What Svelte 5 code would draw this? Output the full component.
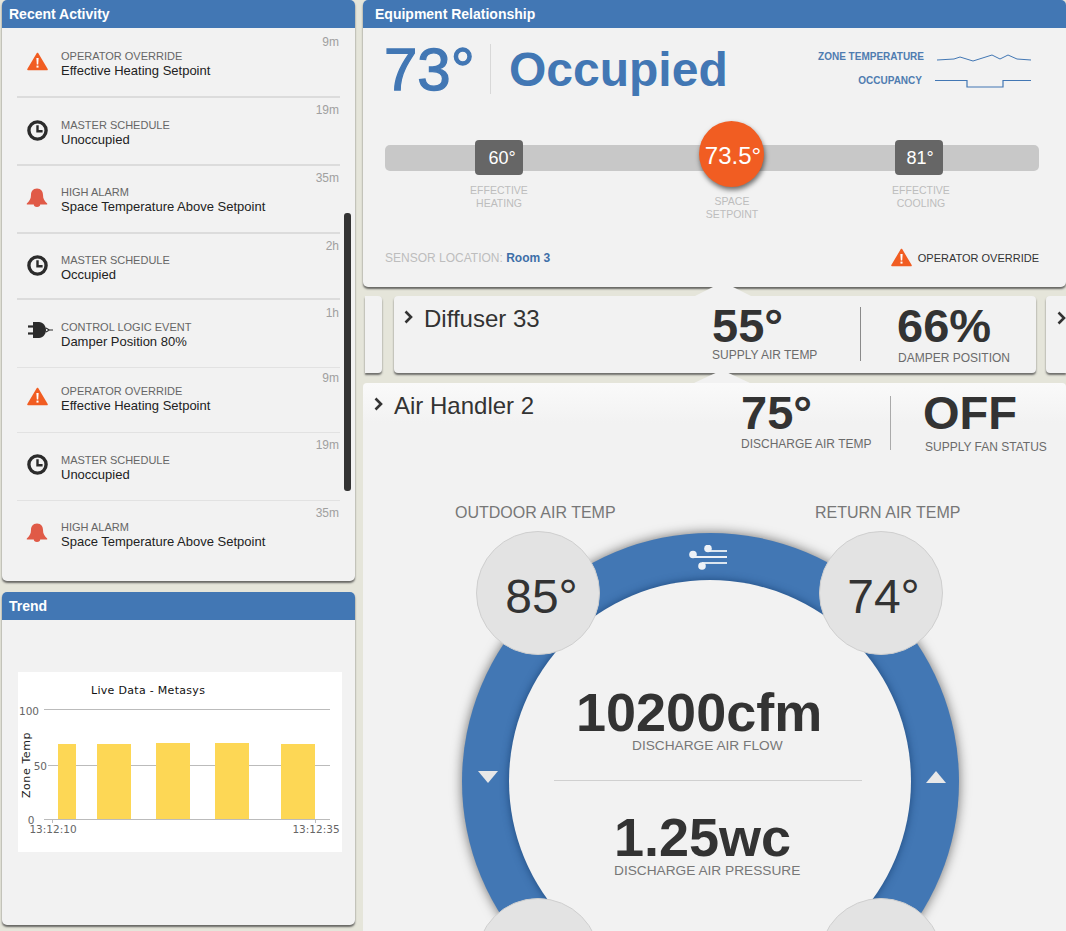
<script>
  const rows = [
    { icon: 'warn', title: 'OPERATOR OVERRIDE', body: 'Effective Heating Setpoint', time: '9m', h: 70, sep: 'thick', pb: 0, tp: 7 },
    { icon: 'clock', title: 'MASTER SCHEDULE', body: 'Unoccupied', time: '19m', h: 68, sep: 'thick', pb: 0, tp: 5 },
    { icon: 'bell', title: 'HIGH ALARM', body: 'Space Temperature Above Setpoint', time: '35m', h: 68, sep: 'thick', pb: 2, tp: 5 },
    { icon: 'clock', title: 'MASTER SCHEDULE', body: 'Occupied', time: '2h', h: 66, sep: 'thick', pb: 0, tp: 5 },
    { icon: 'plug', title: 'CONTROL LOGIC EVENT', body: 'Damper Position 80%', time: '1h', h: 68, sep: 'thin', pb: 2, tp: 6 },
    { icon: 'warn', title: 'OPERATOR OVERRIDE', body: 'Effective Heating Setpoint', time: '9m', h: 65, sep: 'thin', pb: 6, tp: 3 },
    { icon: 'clock', title: 'MASTER SCHEDULE', body: 'Unoccupied', time: '19m', h: 68, sep: 'thin', pb: 2, tp: 5 },
    { icon: 'bell', title: 'HIGH ALARM', body: 'Space Temperature Above Setpoint', time: '35m', h: 68, sep: 'none', pb: 4, tp: 5 }
  ];
  const bars = [
    { x: 40, w: 18, y: 72 },
    { x: 79, w: 34, y: 72 },
    { x: 138, w: 34, y: 71 },
    { x: 197, w: 34, y: 71 },
    { x: 263, w: 34, y: 72 }
  ];
</script>

{#snippet warn()}
  <svg class="ic-warn" viewBox="0 0 21 19">
    <path d="M10.5 1.5 L20 17.5 H1 Z" fill="#f15d22" stroke="#f15d22" stroke-width="1.6" stroke-linejoin="round" />
    <path d="M9.4 6 h2.2 l-.4 6.4 h-1.4 Z" fill="#fff" />
    <rect x="9.5" y="13.6" width="2" height="2" fill="#fff" />
  </svg>
{/snippet}

{#snippet chevron()}
  <svg class="chev" viewBox="0 0 9 14">
    <path d="M1.5 1.5 L7 7 L1.5 12.5" fill="none" stroke="#333" stroke-width="2.6" />
  </svg>
{/snippet}

<div class="page">
  <div class="left">
    <section class="panel activity">
      <header>Recent Activity</header>
      <div class="list">
        {#each rows as r}
          <div class="row {r.sep}" style="height: {r.h}px; padding-bottom: {r.pb}px">
            <div class="icon">
              {#if r.icon === 'warn'}
                {@render warn()}
              {:else if r.icon === 'clock'}
                <svg class="ic-clock" viewBox="0 0 21 21">
                  <circle cx="10.5" cy="10.5" r="8.6" fill="none" stroke="#2b2b2b" stroke-width="3.4" />
                  <path d="M10.5 5.2 V11.2 H15.6" fill="none" stroke="#2b2b2b" stroke-width="2.4" />
                </svg>
              {:else if r.icon === 'bell'}
                <svg class="ic-bell" viewBox="0 0 22 19">
                  <path d="M11 0.5 c-4.2 0 -6 3 -6 6.5 c0 4 -1.6 6 -4.2 8.4 v1.1 h7 a3.2 2.4 0 0 0 6.4 0 h7 v-1.1 c-2.6 -2.4 -4.2 -4.4 -4.2 -8.4 c0 -3.5 -1.8 -6.5 -6 -6.5 z" fill="#e05a47" />
                </svg>
              {:else}
                <svg class="ic-plug" viewBox="0 0 25 16">
                  <rect x="0" y="3.4" width="8" height="2.2" fill="#2b2b2b" />
                  <rect x="0" y="10.4" width="8" height="2.2" fill="#2b2b2b" />
                  <path d="M5 0 h6 c4 0 7 4 7 8 c0 4 -3 8 -7 8 h-6 Z" fill="#2b2b2b" />
                  <path d="M18 6 L21.4 8 L18 10 M21.4 8 H25" fill="none" stroke="#2b2b2b" stroke-width="1.1" />
                </svg>
              {/if}
            </div>
            <div class="txt">
              <div class="ttl">{r.title}</div>
              <div class="bd">{r.body}</div>
            </div>
            <div class="time" style="padding-top: {r.tp}px">{r.time}</div>
          </div>
        {/each}
      </div>
      <div class="scroll"></div>
    </section>

    <section class="panel trend">
      <header>Trend</header>
      <div class="chart">
        <svg viewBox="0 0 324 180" width="324" height="180">
          <text class="ctitle" x="73" y="22">Live Data - Metasys</text>
          <line class="grid" x1="26" x2="312" y1="37.5" y2="37.5" />
          <line class="grid" x1="30" x2="312" y1="93.5" y2="93.5" />
          <line class="grid" x1="26" x2="312" y1="147.5" y2="147.5" />
          <line class="grid" x1="34.5" x2="34.5" y1="147" y2="151" />
          <line class="grid" x1="297.5" x2="297.5" y1="147" y2="151" />
          {#each bars as b}
            <rect x={b.x} y={b.y} width={b.w} height={147 - b.y} fill="#fdd755" />
          {/each}
          <text class="tick" x="21" y="43" text-anchor="end">100</text>
          <text class="tick" x="29" y="98" text-anchor="end">50</text>
          <text class="tick" x="13" y="152" text-anchor="middle">0</text>
          <text class="tick" x="35" y="161" text-anchor="middle">13:12:10</text>
          <text class="tick" x="298" y="161" text-anchor="middle">13:12:35</text>
          <text class="axis" transform="translate(12 93) rotate(-90)" text-anchor="middle">Zone Temp</text>
        </svg>
      </div>
    </section>
  </div>

  <div class="right">
    <section class="panel equip">
      <header>Equipment Relationship</header>
      <div class="top">
        <div class="temp">73°</div>
        <div class="vr"></div>
        <div class="occ">Occupied</div>
        <div class="legend">
          <div class="lab lab1">ZONE TEMPERATURE</div>
          <svg width="94" height="14" viewBox="0 0 94 14">
            <polyline fill="none" stroke="#4277b4" stroke-width="1" points="0,7 17,6 23,4 36,8 55,2 63,6 71,2 80,6 94,7" />
          </svg>
          <div class="lab lab2">OCCUPANCY</div>
          <svg width="96" height="12" viewBox="0 0 96 12">
            <polyline fill="none" stroke="#4277b4" stroke-width="1.2" points="0,2.5 32,2.5 32,9 68,9 68,2.5 96,2.5" />
          </svg>
        </div>
      </div>
      <div class="track">
        <div class="knob k1">60°</div>
        <div class="cap c1">EFFECTIVE<br />HEATING</div>
        <div class="dot">73.5°</div>
        <div class="cap c2">SPACE<br />SETPOINT</div>
        <div class="knob k2">81°</div>
        <div class="cap c3">EFFECTIVE<br />COOLING</div>
      </div>
      <div class="foot">
        <div class="sensor">SENSOR LOCATION: <b>Room 3</b></div>
        <div class="override">{@render warn()}<span>OPERATOR OVERRIDE</span></div>
      </div>
    </section>

    <div class="diffusers">
      <div class="stub"></div>
      <section class="card">
        <div class="notch"></div>
        <div class="name">{@render chevron()}<span>Diffuser 33</span></div>
        <div class="stat s1"><b>55°</b><span>SUPPLY AIR TEMP</span></div>
        <div class="vr2"></div>
        <div class="stat s2"><b>66%</b><span>DAMPER POSITION</span></div>
      </section>
      <div class="stub stubr">{@render chevron()}</div>
    </div>

    <section class="handler">
      <div class="notch"></div>
      <div class="hhead">
        <div class="name">{@render chevron()}<span>Air Handler 2</span></div>
        <div class="stat s3"><b>75°</b><span>DISCHARGE AIR TEMP</span></div>
        <div class="vr2"></div>
        <div class="stat s4"><b>OFF</b><span>SUPPLY FAN STATUS</span></div>
      </div>

      <div class="outlab oa">OUTDOOR AIR TEMP</div>
      <div class="outlab ra">RETURN AIR TEMP</div>

      <div class="ring">
        <svg class="wind" viewBox="0 0 40 26" width="40" height="26">
          <g stroke="#eef2f7" stroke-width="1.8" fill="#eef2f7">
            <line x1="20" y1="6" x2="39" y2="6" />
            <line x1="5" y1="12" x2="39" y2="12" />
            <line x1="14" y1="18" x2="39" y2="18" />
            <circle cx="20" cy="3.5" r="3.8" stroke="none" />
            <circle cx="5" cy="9.5" r="3.8" stroke="none" />
            <circle cx="14" cy="21" r="3.8" stroke="none" />
          </g>
        </svg>
        <div class="tri down"></div>
        <div class="tri up"></div>
        <div class="inner">
          <div class="big b1">10200cfm</div>
          <div class="sm m1">DISCHARGE AIR FLOW</div>
          <div class="rule"></div>
          <div class="big b2">1.25wc</div>
          <div class="sm m2">DISCHARGE AIR PRESSURE</div>
        </div>
      </div>
      <div class="ball tl"><span>85°</span></div>
      <div class="ball tr"><span>74°</span></div>
      <div class="ball bl"></div>
      <div class="ball br"></div>
    </section>
  </div>
</div>

<style>
  :global(body) {
    margin: 0;
    background: #e5e5da;
    overflow: hidden;
  }
  .page {
    display: flex;
    gap: 8px;
    height: 931px;
    padding-left: 2px;
    overflow: hidden;
    font-family: "Liberation Sans", Arial, sans-serif;
    color: #333;
  }
  .left {
    width: 353px;
    flex: none;
    display: flex;
    flex-direction: column;
    gap: 11px;
  }
  .right {
    width: 703px;
    flex: none;
    display: flex;
    flex-direction: column;
  }
  .panel {
    position: relative;
    background: #f2f2f2;
    border-radius: 5px;
    box-shadow: 0 2px 2px rgba(60, 60, 60, 0.75);
  }
  header {
    height: 28px;
    line-height: 28px;
    padding-left: 7px;
    background: #4277b4;
    color: #fff;
    font-size: 14px;
    font-weight: 700;
    border-radius: 5px 5px 0 0;
  }
  .activity {
    height: 581px;
  }
  .list {
    padding: 0 15px;
  }
  .row {
    display: flex;
    align-items: center;
    box-sizing: border-box;
    padding-right: 1px;
  }
  .row.thick {
    border-bottom: 2px solid #dcdcdc;
  }
  .row.thin {
    border-bottom: 1px solid #e2e2e2;
  }
  .icon {
    width: 44px;
    flex: none;
    display: flex;
    justify-content: center;
    padding-right: 4px;
    box-sizing: border-box;
    margin-top: -2px;
  }
  .ic-warn {
    width: 21px;
    height: 19px;
    display: block;
  }
  .ic-clock {
    width: 21px;
    height: 21px;
    display: block;
  }
  .ic-bell {
    width: 22px;
    height: 19px;
    display: block;
  }
  .ic-plug {
    width: 25px;
    height: 16px;
    display: block;
    margin-left: 6px;
    margin-top: -4px;
  }
  .txt {
    flex: 1;
    margin-top: 3px;
  }
  .ttl {
    font-size: 11px;
    line-height: 14px;
    color: #666;
  }
  .bd {
    font-size: 13px;
    line-height: 15px;
    color: #222;
  }
  .time {
    align-self: flex-start;
    font-size: 12px;
    line-height: 14px;
    color: #a0a0a0;
  }
  .scroll {
    position: absolute;
    left: 342px;
    top: 213px;
    width: 7px;
    height: 278px;
    background: #333;
    border-radius: 3px;
  }
  .trend {
    height: 333px;
  }
  .chart {
    margin: 52px 0 0 16px;
    width: 324px;
    height: 180px;
    background: #fff;
  }
  .chart svg {
    display: block;
  }
  .ctitle {
    font: 11px "DejaVu Sans", sans-serif;
    fill: #111;
    letter-spacing: 0.3px;
  }
  .tick {
    font: 10.5px "DejaVu Sans", sans-serif;
    fill: #666;
  }
  .axis {
    font: 11px "DejaVu Sans", sans-serif;
    fill: #222;
    letter-spacing: 0.6px;
  }
  .grid {
    stroke: #bbb;
    stroke-width: 1;
  }
  .equip {
    height: 287px;
    box-sizing: border-box;
    flex: none;
  }
  .equip header {
    padding-left: 12px;
  }
  .top {
    display: flex;
    align-items: flex-start;
    padding: 12px 0 0 21px;
    height: 60px;
    position: relative;
  }
  .temp {
    font-size: 60px;
    line-height: 60px;
    color: #4277b4;
    -webkit-text-stroke: 1.3px #4277b4;
    width: 106px;
  }
  .vr {
    width: 1px;
    height: 50px;
    margin-top: 4px;
    background: #d8d8d8;
  }
  .occ {
    font-size: 48px;
    font-weight: 700;
    line-height: 60px;
    color: #4277b4;
    margin-left: 18px;
  }
  .legend {
    margin-left: auto;
    margin-right: 35px;
    display: grid;
    grid-template-columns: auto 96px;
    column-gap: 11px;
    row-gap: 10px;
    align-items: center;
    justify-items: end;
    margin-top: 10px;
  }
  .lab {
    font-size: 10px;
    font-weight: 700;
    color: #4f7cb0;
    line-height: 14px;
  }
  .lab2 {
    margin-right: 2px;
  }
  .legend svg {
    display: block;
    transform: translateY(3px);
  }
  .track {
    position: relative;
    margin: 45px 0 0 22px;
    width: 654px;
    height: 26px;
    background: #c8c8c8;
    border-radius: 5px;
  }
  .knob {
    position: absolute;
    top: -5px;
    width: 48px;
    height: 35px;
    box-sizing: border-box;
    background: #666;
    border-radius: 4px;
    color: #fff;
    font-size: 18px;
    line-height: 36px;
    text-align: center;
  }
  .k1 {
    left: 90px;
    padding-left: 6px;
  }
  .k2 {
    left: 510px;
    padding-left: 2px;
  }
  .dot {
    position: absolute;
    left: 314px;
    top: -24px;
    width: 65px;
    height: 66px;
    box-sizing: border-box;
    padding-left: 3px;
    border-radius: 50%;
    background: #f15d22;
    color: #fff;
    font-size: 24px;
    line-height: 69px;
    text-align: center;
    box-shadow: 1px 3px 5px rgba(0, 0, 0, 0.55);
  }
  .cap {
    position: absolute;
    width: 100px;
    text-align: center;
    font-size: 10.5px;
    line-height: 13px;
    color: #bdbdbd;
  }
  .c1 {
    left: 64px;
    top: 39px;
  }
  .c2 {
    left: 297px;
    top: 50px;
  }
  .c3 {
    left: 486px;
    top: 39px;
  }
  .foot {
    display: flex;
    justify-content: space-between;
    align-items: center;
    margin: 77px 27px 0 22px;
  }
  .sensor {
    font-size: 12px;
    color: #bdbdbd;
  }
  .sensor b {
    color: #3d6fa8;
  }
  .override {
    display: flex;
    align-items: center;
    gap: 6px;
    font-size: 11px;
    color: #333;
  }
  .diffusers {
    display: flex;
    flex: none;
    height: 77px;
    margin: 9px 0 10px;
    padding-left: 2px;
    gap: 12px;
  }
  .stub {
    width: 17px;
    flex: none;
    background: #f2f2f2;
    border-radius: 0 4px 4px 0;
    box-shadow: 0 2px 2px rgba(60, 60, 60, 0.7);
  }
  .stubr {
    width: 20px;
    margin-left: -2px;
    border-radius: 4px 0 0 4px;
    padding: 15px 0 0 11px;
    box-sizing: border-box;
    overflow: hidden;
  }
  .card {
    position: relative;
    flex: none;
    width: 642px;
    display: flex;
    align-items: flex-start;
    background: #f2f2f2;
    border-radius: 4px;
    box-shadow: 0 2px 2px rgba(60, 60, 60, 0.7);
  }
  .notch {
    position: absolute;
    left: 301px;
    top: -14px;
    width: 56px;
    height: 14px;
    background: #f2f2f2;
    clip-path: polygon(50% 0, 100% 100%, 0 100%);
  }
  .name {
    display: flex;
    align-items: center;
    gap: 11px;
    font-size: 24px;
    line-height: 28px;
    color: #333;
  }
  .card .name {
    width: 318px;
    padding: 9px 0 0 10px;
    box-sizing: border-box;
    flex: none;
  }
  .chev {
    width: 9px;
    height: 14px;
    flex: none;
    margin-top: -4px;
  }
  .stat {
    display: flex;
    flex-direction: column;
    flex: none;
    box-sizing: border-box;
  }
  .stat b {
    font-size: 47px;
    line-height: 44px;
    color: #333;
  }
  .stat span {
    font-size: 12px;
    line-height: 14px;
    color: #6b6b6b;
    white-space: nowrap;
  }
  .s1 {
    width: 148px;
    padding-top: 8px;
  }
  .vr2 {
    width: 1px;
    height: 54px;
    background: #8a8a8a;
    flex: none;
    margin-top: 11px;
  }
  .s2 {
    padding: 8px 0 0 36px;
  }
  .s2 span {
    margin-top: 3px;
    margin-left: 1px;
  }
  .handler {
    position: relative;
    flex: 1;
    background: linear-gradient(#fafafa, #f2f2f2 40px);
    border-radius: 4px 4px 0 0;
  }
  .handler .notch {
    left: 331px;
    top: -13px;
    height: 13px;
  }
  .hhead {
    display: flex;
    align-items: flex-start;
    height: 70px;
  }
  .hhead .name {
    width: 378px;
    padding: 9px 0 0 11px;
    box-sizing: border-box;
    flex: none;
  }
  .s3 {
    width: 149px;
    padding-top: 8px;
  }
  .s3 span {
    margin-top: 2px;
  }
  .hhead .vr2 {
    margin-top: 13px;
    background: #aaa;
  }
  .s4 {
    padding: 8px 0 0 32px;
  }
  .s4 span {
    margin-top: 5px;
    margin-left: 2px;
  }
  .outlab {
    position: absolute;
    top: 121px;
    font-size: 16px;
    line-height: 18px;
    color: #777;
  }
  .oa {
    left: 92px;
  }
  .ra {
    left: 452px;
  }
  .ring {
    position: absolute;
    left: 99px;
    top: 150px;
    width: 497px;
    height: 497px;
    border-radius: 50%;
    background: #4277b4;
    box-shadow: 0 0 12px rgba(0, 0, 0, 0.55);
  }
  .inner {
    position: absolute;
    left: 47px;
    top: 47px;
    width: 402px;
    height: 402px;
    border-radius: 50%;
    background: #f2f2f2;
    box-shadow: 0 0 8px rgba(20, 60, 110, 0.8);
  }
  .wind {
    position: absolute;
    left: 226px;
    top: 12px;
  }
  .tri {
    position: absolute;
    width: 20px;
    height: 12px;
    background: #e8e8e8;
  }
  .down {
    left: 16px;
    top: 238px;
    clip-path: polygon(0 0, 100% 0, 50% 100%);
  }
  .up {
    left: 464px;
    top: 238px;
    clip-path: polygon(50% 0, 100% 100%, 0 100%);
  }
  .big {
    position: absolute;
    font-size: 54px;
    font-weight: 700;
    line-height: 50px;
    color: #333;
    white-space: nowrap;
  }
  .sm {
    position: absolute;
    font-size: 13.7px;
    line-height: 15px;
    color: #777;
    white-space: nowrap;
  }
  .b1 {
    left: 67px;
    top: 107px;
  }
  .m1 {
    left: 123px;
    top: 158px;
  }
  .rule {
    position: absolute;
    left: 45px;
    top: 200px;
    width: 308px;
    height: 1px;
    background: #d0d0d0;
  }
  .b2 {
    left: 105px;
    top: 232px;
  }
  .m2 {
    left: 105px;
    top: 283px;
  }
  .ball {
    position: absolute;
    width: 122px;
    height: 122px;
    border-radius: 50%;
    background: #e3e3e3;
    border: 1px solid #cfcfcf;
    text-align: center;
    font-size: 48px;
    line-height: 130px;
    color: #333;
  }
  .ball span {
    margin-left: 7px;
  }
  .tr span {
    margin-left: 5px;
  }
  .tl {
    left: 113px;
    top: 148px;
  }
  .tr {
    left: 456px;
    top: 148px;
  }
  .bl {
    left: 113px;
    top: 515px;
  }
  .br {
    left: 456px;
    top: 515px;
  }
</style>
